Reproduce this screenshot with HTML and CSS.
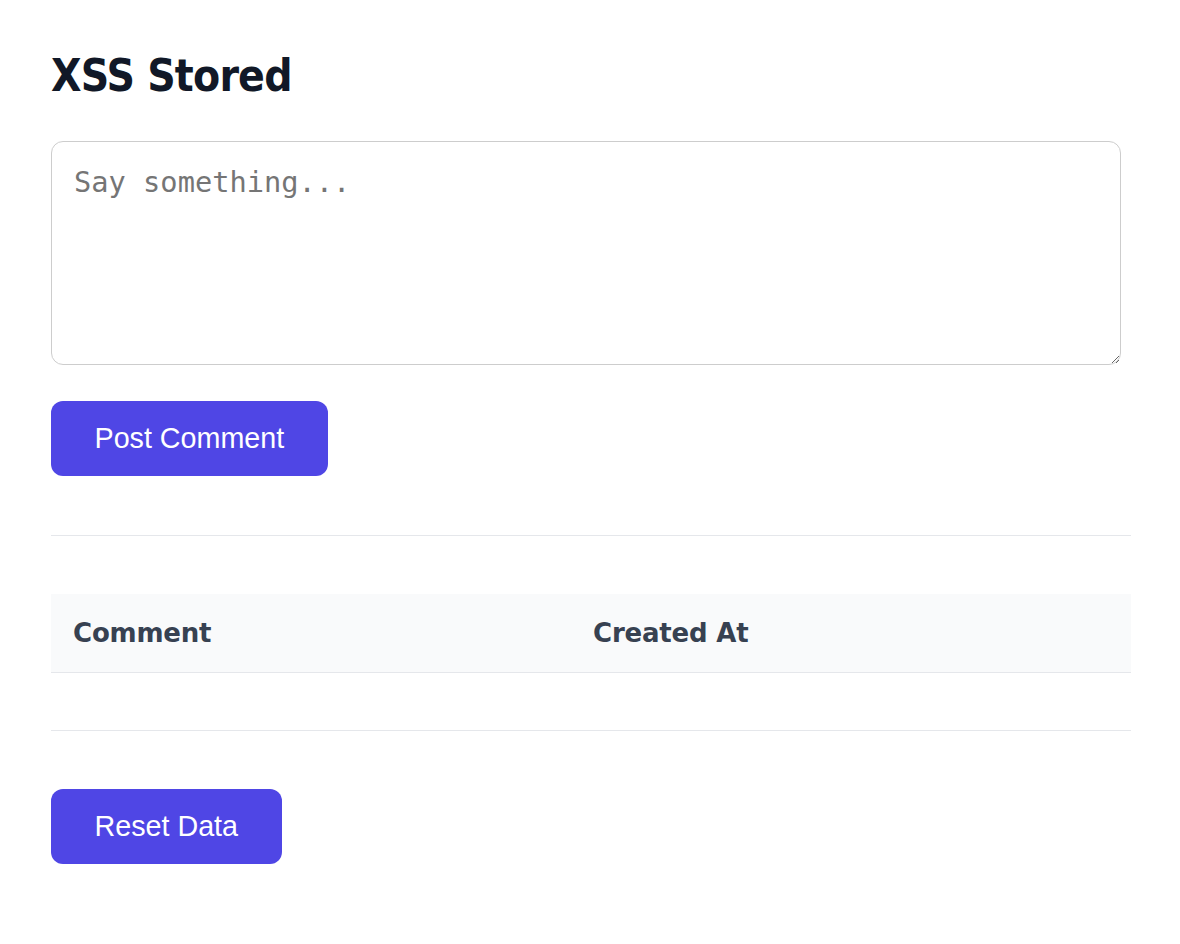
FILE: index.html
```html
<!DOCTYPE html>
<html lang="en">
<head>
<meta charset="utf-8">
<title>XSS Stored</title>
<link rel="stylesheet" href="styles.css">
</head>
<body>
<main class="page">
  <h1 class="title">XSS Stored</h1>
  <form class="comment-form">
    <textarea class="comment-input" placeholder="Say something..."></textarea>
    <button type="button" class="btn">Post Comment</button>
  </form>
  <hr class="divider">
  <table class="comments">
    <colgroup>
      <col class="col-comment">
      <col>
    </colgroup>
    <thead>
      <tr>
        <th>Comment</th>
        <th>Created At</th>
      </tr>
    </thead>
    <tbody></tbody>
  </table>
  <hr class="divider divider-bottom">
  <button type="button" class="btn">Reset Data</button>
</main>
</body>
</html>
```
FILE: styles.css
```css
html, body {
  margin: 0;
  padding: 0;
  background: #ffffff;
}

.page {
  width: 1080px;
  padding: 50px 51px 40px;
  box-sizing: content-box;
}

.title {
  margin: 0 0 39px;
  font-family: "DejaVu Sans Condensed", "DejaVu Sans", sans-serif;
  font-stretch: condensed;
  font-weight: bold;
  font-size: 44px;
  line-height: 52px;
  color: #111827;
  letter-spacing: -0.8px;
}

.comment-form {
  display: flex;
  flex-direction: column;
  align-items: flex-start;
  gap: 36px;
  margin: 0;
}

.comment-input {
  display: block;
  width: 1070px;
  height: 224px;
  box-sizing: border-box;
  margin: 0;
  padding: 23px 22px;
  border: 1px solid #cdcdcd;
  border-radius: 12px;
  font-family: "DejaVu Sans Mono", monospace;
  font-size: 28.7px;
  color: #111827;
  background: #fff;
  resize: vertical;
}

.comment-input::placeholder {
  color: #757575;
}

.btn {
  display: inline-block;
  margin: 0;
  padding: 21px 43.5px;
  border: none;
  border-radius: 12px;
  background: #4f46e5;
  color: #ffffff;
  font-family: "Liberation Sans", Arial, sans-serif;
  font-size: 28.7px;
  line-height: 33px;
  cursor: pointer;
}

.divider {
  margin: 59px 0 58px;
  border: 0;
  border-top: 1px solid #e5e7eb;
  height: 0;
}

.divider-bottom {
  margin-top: 57px;
}

.comments {
  width: 100%;
  border-collapse: collapse;
}

.col-comment {
  width: 520px;
}

.comments th {
  text-align: left;
  padding: 22px 22px;
  background: #f9fafb;
  border-bottom: 1px solid #e5e7eb;
  font-family: "DejaVu Sans", sans-serif;
  font-weight: bold;
  font-size: 26px;
  line-height: 34px;
  color: #374151;
  letter-spacing: -0.2px;
}
```
